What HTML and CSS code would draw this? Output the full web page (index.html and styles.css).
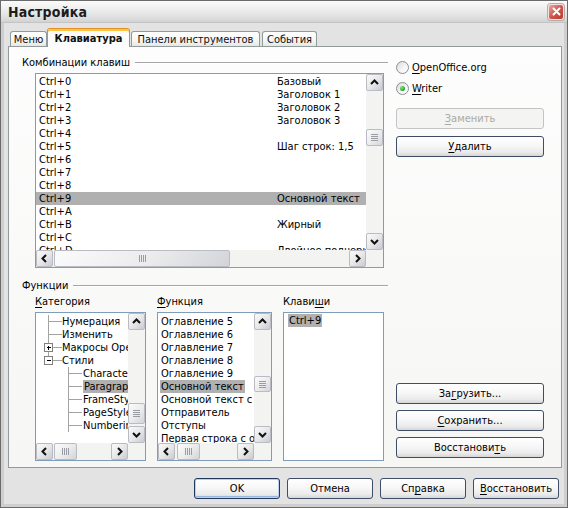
FILE: index.html
```html
<!DOCTYPE html>
<html lang="ru">
<head>
<meta charset="utf-8">
<title>Настройка</title>
<link rel="stylesheet" href="styles.css">
</head>
<body>
<div class="window">
  <div class="titlebar">
    <span class="title">Настройка</span>
    <span class="close"><svg width="13" height="13" viewBox="0 0 13 13"><path d="M3.5 3.5l6 6M9.5 3.5l-6 6" stroke="#fff" stroke-width="2" stroke-linecap="round"/></svg></span>
  </div>
  <div class="client">
    <div class="tabs">
      <div class="tab t-menu">Меню</div>
      <div class="tab active">Клавиатура</div>
      <div class="tab t-panels">Панели инструментов</div>
      <div class="tab t-events">События</div>
    </div>
    <div class="panel">
      <div class="section sec-top">
        <div class="col-left">
          <div class="group-head"><span>Комбинации клавиш</span><i></i></div>
          <div class="listbox main-list">
            <div class="lb-content pad1">
              <div class="krow"><span>Ctrl+0</span><span>Базовый</span></div>
              <div class="krow"><span>Ctrl+1</span><span>Заголовок 1</span></div>
              <div class="krow"><span>Ctrl+2</span><span>Заголовок 2</span></div>
              <div class="krow"><span>Ctrl+3</span><span>Заголовок 3</span></div>
              <div class="krow"><span>Ctrl+4</span><span></span></div>
              <div class="krow"><span>Ctrl+5</span><span>Шаг строк: 1,5</span></div>
              <div class="krow"><span>Ctrl+6</span><span></span></div>
              <div class="krow"><span>Ctrl+7</span><span></span></div>
              <div class="krow"><span>Ctrl+8</span><span></span></div>
              <div class="krow sel"><span>Ctrl+9</span><span>Основной текст</span></div>
              <div class="krow"><span>Ctrl+A</span><span></span></div>
              <div class="krow"><span>Ctrl+B</span><span>Жирный</span></div>
              <div class="krow"><span>Ctrl+C</span><span></span></div>
              <div class="krow"><span>Ctrl+D</span><span>Двойное подчеркивание</span></div>
            </div>
            <div class="vscroll">
              <div class="sbtn"><svg width="15" height="15" viewBox="0 0 15 15"><path d="M4 9l3.5-3.5L11 9" class="chev"/></svg></div>
              <div class="track"><div class="thumb" style="margin-top:38px;height:17px"><svg width="7" height="7" viewBox="0 0 7 7"><path d="M0 0.5h7M0 2.5h7M0 4.5h7M0 6.5h7" class="grip"/></svg></div></div>
              <div class="sbtn"><svg width="15" height="15" viewBox="0 0 15 15"><path d="M4 6l3.5 3.5L11 6" class="chev"/></svg></div>
            </div>
            <div class="hscroll">
              <div class="sbtn"><svg width="15" height="15" viewBox="0 0 15 15"><path d="M9 4L5.5 7.5 9 11" class="chev"/></svg></div>
              <div class="track"><div class="thumb" style="margin-left:1px;width:176px"><svg width="7" height="7" viewBox="0 0 7 7"><path d="M0.5 0v7M2.5 0v7M4.5 0v7M6.5 0v7" class="grip"/></svg></div></div>
              <div class="sbtn"><svg width="15" height="15" viewBox="0 0 15 15"><path d="M6 4l3.5 3.5L6 11" class="chev"/></svg></div>
            </div>
            <div class="corner"></div>
          </div>
        </div>
        <div class="col-right">
          <div class="radio"><span class="rb"></span><span><u>O</u>penOffice.org</span></div>
          <div class="radio"><span class="rb checked"></span><span><u>W</u>riter</span></div>
          <div class="btn disabled"><span><u>З</u>аменить</span></div>
          <div class="btn"><span><u>У</u>далить</span></div>
        </div>
      </div>
      <div class="section sec-bottom">
        <div class="col-left">
          <div class="group-head"><span>Функции</span><i></i></div>
          <div class="cols">
            <div class="col cat">
              <div class="col-label"><u>К</u>атегория</div>
              <div class="listbox small-list">
                <div class="lb-content pad2">
                  <div class="trow">
                    <svg width="26" height="13" viewBox="0 0 26 13" class="tl"><path d="M12.5 0v13M12.5 6.5H26"/></svg><span>Нумерация</span>
                  </div>
                  <div class="trow">
                    <svg width="26" height="13" viewBox="0 0 26 13" class="tl"><path d="M12.5 0v13M12.5 6.5H26"/></svg><span>Изменить</span>
                  </div>
                  <div class="trow">
                    <svg width="26" height="13" viewBox="0 0 26 13" class="tl"><path d="M12.5 0v2.5M12.5 10.5V13M16.5 6.5H26"/><rect x="8.5" y="2.5" width="8" height="8" class="box"/><path d="M10.5 6.5h4M12.5 4.5v4" class="sign"/></svg><span>Макросы OpenOffice.org</span>
                  </div>
                  <div class="trow">
                    <svg width="26" height="13" viewBox="0 0 26 13" class="tl"><path d="M12.5 0v2.5M16.5 6.5H26"/><rect x="8.5" y="2.5" width="8" height="8" class="box"/><path d="M10.5 6.5h4" class="sign"/></svg><span>Стили</span>
                  </div>
                  <div class="trow">
                    <svg width="47" height="13" viewBox="0 0 47 13" class="tl"><path d="M32.5 0v13M32.5 6.5H46"/></svg><span>CharacterStyles</span>
                  </div>
                  <div class="trow">
                    <svg width="47" height="13" viewBox="0 0 47 13" class="tl"><path d="M32.5 0v13M32.5 6.5H46"/></svg><span class="hl">ParagraphStyles</span>
                  </div>
                  <div class="trow">
                    <svg width="47" height="13" viewBox="0 0 47 13" class="tl"><path d="M32.5 0v13M32.5 6.5H46"/></svg><span>FrameStyles</span>
                  </div>
                  <div class="trow">
                    <svg width="47" height="13" viewBox="0 0 47 13" class="tl"><path d="M32.5 0v13M32.5 6.5H46"/></svg><span>PageStyles</span>
                  </div>
                  <div class="trow">
                    <svg width="47" height="13" viewBox="0 0 47 13" class="tl"><path d="M32.5 0v13M32.5 6.5H46"/></svg><span>NumberingStyles</span>
                  </div>
                </div>
                <div class="vscroll">
                  <div class="sbtn"><svg width="15" height="15" viewBox="0 0 15 15"><path d="M4 9l3.5-3.5L11 9" class="chev"/></svg></div>
                  <div class="track"><div class="thumb" style="margin-top:73px;height:21px"><svg width="7" height="7" viewBox="0 0 7 7"><path d="M0 0.5h7M0 2.5h7M0 4.5h7M0 6.5h7" class="grip"/></svg></div></div>
                  <div class="sbtn"><svg width="15" height="15" viewBox="0 0 15 15"><path d="M4 6l3.5 3.5L11 6" class="chev"/></svg></div>
                </div>
                <div class="hscroll">
                  <div class="sbtn"><svg width="15" height="15" viewBox="0 0 15 15"><path d="M9 4L5.5 7.5 9 11" class="chev"/></svg></div>
                  <div class="track"><div class="thumb" style="margin-left:1px;width:23px"><svg width="7" height="7" viewBox="0 0 7 7"><path d="M0.5 0v7M2.5 0v7M4.5 0v7M6.5 0v7" class="grip"/></svg></div></div>
                  <div class="sbtn"><svg width="15" height="15" viewBox="0 0 15 15"><path d="M6 4l3.5 3.5L6 11" class="chev"/></svg></div>
                </div>
                <div class="corner"></div>
              </div>
            </div>
            <div class="col func">
              <div class="col-label"><u>Ф</u>ункция</div>
              <div class="listbox small-list">
                <div class="lb-content pad2 textlist">
                  <div class="frow">Оглавление 5</div>
                  <div class="frow">Оглавление 6</div>
                  <div class="frow">Оглавление 7</div>
                  <div class="frow">Оглавление 8</div>
                  <div class="frow">Оглавление 9</div>
                  <div class="frow"><span class="hl">Основной текст</span></div>
                  <div class="frow">Основной текст с отступом</div>
                  <div class="frow">Отправитель</div>
                  <div class="frow">Отступы</div>
                  <div class="frow">Первая строка с отступом</div>
                </div>
                <div class="vscroll">
                  <div class="sbtn"><svg width="15" height="15" viewBox="0 0 15 15"><path d="M4 9l3.5-3.5L11 9" class="chev"/></svg></div>
                  <div class="track"><div class="thumb" style="margin-top:46px;height:16px"><svg width="7" height="7" viewBox="0 0 7 7"><path d="M0 0.5h7M0 2.5h7M0 4.5h7M0 6.5h7" class="grip"/></svg></div></div>
                  <div class="sbtn"><svg width="15" height="15" viewBox="0 0 15 15"><path d="M4 6l3.5 3.5L11 6" class="chev"/></svg></div>
                </div>
                <div class="hscroll">
                  <div class="sbtn"><svg width="15" height="15" viewBox="0 0 15 15"><path d="M9 4L5.5 7.5 9 11" class="chev"/></svg></div>
                  <div class="track"><div class="thumb" style="margin-left:2px;width:23px"><svg width="7" height="7" viewBox="0 0 7 7"><path d="M0.5 0v7M2.5 0v7M4.5 0v7M6.5 0v7" class="grip"/></svg></div></div>
                  <div class="sbtn"><svg width="15" height="15" viewBox="0 0 15 15"><path d="M6 4l3.5 3.5L6 11" class="chev"/></svg></div>
                </div>
                <div class="corner"></div>
              </div>
            </div>
            <div class="col keys">
              <div class="col-label">Клави<u>ш</u>и</div>
              <div class="listbox keys-list">
                <div class="frow"><span class="hl">Ctrl+9</span></div>
              </div>
            </div>
          </div>
        </div>
        <div class="col-right bottom-buttons">
          <div class="btn"><span>За<u>г</u>рузить...</span></div>
          <div class="btn"><span><u>С</u>охранить...</span></div>
          <div class="btn"><span>Восстанови<u>т</u>ь</span></div>
        </div>
      </div>
    </div>
    <div class="footer">
      <div class="btn fbtn default"><span>OK</span></div>
      <div class="btn fbtn"><span>Отмена</span></div>
      <div class="btn fbtn"><span>Сп<u>р</u>авка</span></div>
      <div class="btn fbtn"><span><u>В</u>осстановить</span></div>
    </div>
  </div>
</div>
</body>
</html>
```

FILE: styles.css
```css
* { box-sizing: border-box; }
html, body { margin: 0; padding: 0; }
body {
  width: 568px;
  height: 508px;
  overflow: hidden;
  font-family: "DejaVu Sans Condensed", "DejaVu Sans", sans-serif;
  font-stretch: condensed;
  font-size: 11px;
  color: #000;
  background: #e3e3e3;
}
u { text-decoration: underline; text-underline-offset: 2px; }

.window {
  width: 568px;
  height: 508px;
  border: 1px solid #6b6b6b;
  background: #e3e3e3;
  display: flex;
  flex-direction: column;
}

.titlebar {
  height: 22px;
  flex: none;
  display: flex;
  align-items: center;
  justify-content: space-between;
  padding: 0 3px 0 7px;
  background: linear-gradient(#fbfbfb, #ececec 45%, #dedede 80%, #d2d2d2);
  border-bottom: 1px solid #c4c4c4;
}
.title {
  font-weight: bold;
  font-size: 14px;
  color: #1c1c1c;
  letter-spacing: 0.2px;
}
.close {
  width: 16px;
  height: 16px;
  border: 1px solid #f3e3e1;
  border-radius: 3px;
  background: linear-gradient(135deg, #eba79f, #d1574b 50%, #b8392e);
  display: flex;
  align-items: center;
  justify-content: center;
  box-shadow: 0 0 0 1px #b9a9a8;
}

.client {
  flex: 1;
  border: 3px solid #cfcfcf;
  border-top: 0;
  padding: 5px 0 0 4px;
  display: flex;
  flex-direction: column;
}

/* tabs */
.tabs {
  height: 18px;
  display: flex;
  align-items: flex-end;
  padding-left: 2px;
  position: relative;
  z-index: 1;
}
.tab {
  height: 15px;
  border: 1px solid #919b9c;
  border-bottom: 0;
  border-radius: 3px 3px 0 0;
  background: linear-gradient(#ffffff, #f3f3f0 70%, #e6e6e2);
  display: flex;
  align-items: center;
  justify-content: center;
  white-space: nowrap;
  color: #111;
}
.t-menu { width: 37px; }
.t-panels { width: 129px; margin-left: 1px; }
.t-events { width: 55px; margin-left: 2px; }
.tab.active {
  width: 83px;
  height: 19px;
  margin-bottom: -1px;
  font-weight: bold;
  background: #fcfcfc;
  border-top: 1px solid #e68b2c;
  box-shadow: inset 0 2px 0 #ffc83c;
  padding-top: 1px;
}

.panel {
  width: 554px;
  height: 422px;
  border: 1px solid #919b9c;
  background: linear-gradient(#fdfdfd, #f6f6f4);
  padding: 9px 0 0 13px;
  display: flex;
  flex-direction: column;
}

.section { display: flex; gap: 8px; }
.col-left { width: 366px; flex: none; }
.col-right { width: 148px; flex: none; display: flex; flex-direction: column; }

.group-head {
  height: 13px;
  line-height: 13px;
  display: flex;
  align-items: center;
  gap: 5px;
  white-space: nowrap;
}
.group-head i {
  flex: 1;
  height: 1px;
  background: #a6a6a6;
  box-shadow: 0 1px 0 #ffffff;
}

/* listboxes */
.listbox {
  border: 1px solid #7f9db9;
  background: #fff;
  display: grid;
  grid-template-columns: 1fr 17px;
  grid-template-rows: 1fr 17px;
  overflow: hidden;
}
.main-list { width: 349px; height: 195px; margin: 4px 0 0 13px; }
.lb-content { overflow: hidden; min-width: 0; min-height: 0; }
.pad1 { padding-top: 1px; }
.pad2 { padding-top: 2px; }

.krow {
  height: 13px;
  line-height: 13px;
  display: grid;
  grid-template-columns: 238px auto;
  padding-left: 3px;
  white-space: nowrap;
}
.krow.sel { background: #b0b0b0; }

.vscroll { display: flex; flex-direction: column; background: #f3f3f1; }
.hscroll { display: flex; background: #f3f3f1; }
.corner { background: #f3f3f1; }
.vscroll .track { flex: 1; display: flex; flex-direction: column; }
.hscroll .track { flex: 1; display: flex; }

.sbtn {
  width: 17px;
  height: 17px;
  flex: none;
  border: 1px solid #b9bcc5;
  border-radius: 2px;
  background: linear-gradient(135deg, #fafafa, #e6e6e8 55%, #c9cad0);
  display: flex;
  align-items: center;
  justify-content: center;
}
.chev { fill: none; stroke: #111; stroke-width: 2; }
.thumb {
  flex: none;
  border: 1px solid #b9bcc5;
  border-radius: 2px;
  background: linear-gradient(135deg, #fbfbfb, #ebebed 55%, #d3d4d9);
  display: flex;
  align-items: center;
  justify-content: center;
}
.vscroll .thumb { width: 17px; }
.hscroll .thumb { height: 17px; }
.grip { fill: none; stroke: #9a9ca4; stroke-width: 1; }

/* bottom section */
.sec-bottom { margin-top: 11px; }
.cols { display: flex; gap: 11px; padding-left: 13px; margin-top: 3px; }
.col-label { height: 13px; line-height: 13px; white-space: nowrap; }
.small-list { height: 149px; margin-top: 4px; }
.cat .small-list { width: 111px; }
.func .small-list { width: 115px; }
.keys-list {
  width: 101px;
  height: 149px;
  margin-top: 4px;
  display: block;
  padding: 1px 0 0 2px;
}

.trow {
  height: 13px;
  line-height: 13px;
  display: flex;
  align-items: center;
  white-space: nowrap;
}
.tl { flex: none; display: block; }
.tl path { fill: none; stroke: #a3a3a3; stroke-width: 1; shape-rendering: crispEdges; }
.tl .box { fill: #fff; stroke: #808080; stroke-width: 1; shape-rendering: crispEdges; }
.tl .sign { stroke: #000; }

.frow {
  height: 13px;
  line-height: 13px;
  white-space: nowrap;
  padding-left: 2px;
}
.textlist .frow { padding-left: 3px; }
.hl {
  display: inline-block;
  height: 13px;
  background: #b0b0b0;
  padding: 0 1px;
}
.textlist .hl { margin-left: -1px; }

/* radios */
.radio {
  height: 15px;
  display: flex;
  align-items: center;
  gap: 3px;
  white-space: nowrap;
}
.col-right > .radio:first-child { margin-top: 4px; }
.radio + .radio { margin-top: 6px; }
.rb {
  width: 13px;
  height: 13px;
  border-radius: 50%;
  border: 1px solid #8a8d95;
  background: linear-gradient(135deg, #dcdcdc, #f6f6f6 60%, #ffffff);
  display: flex;
  align-items: center;
  justify-content: center;
}
.rb.checked::after {
  content: "";
  width: 5px;
  height: 5px;
  border-radius: 50%;
  background: radial-gradient(circle at 35% 35%, #8be38b, #21a121 70%);
}

/* buttons */
.btn {
  height: 21px;
  border: 1px solid #3f4e66;
  border-radius: 3px;
  background: linear-gradient(#ffffff, #f7f7f7 45%, #ebebeb 80%, #d6d6d6);
  display: flex;
  align-items: center;
  justify-content: center;
  white-space: nowrap;
  color: #000;
}
.col-right .btn { width: 148px; }
.col-right .btn.disabled { margin-top: 12px; }
.col-right .btn + .btn { margin-top: 7px; }
.btn.disabled {
  border-color: #c4c4c4;
  background: #f4f4f3;
  color: #acaaa0;
}
.bottom-buttons { justify-content: flex-end; padding-bottom: 3px; }
.bottom-buttons .btn + .btn { margin-top: 6px; }

.footer {
  display: flex;
  justify-content: flex-end;
  gap: 7px;
  padding-right: 5px;
  margin-top: 10px;
}
.fbtn { width: 86px; }
.fbtn.default {
  border-color: #22395e;
  box-shadow: inset 0 0 0 1px #bcd0ee, inset 0 -1px 0 1px #9bb5dc;
}
```
